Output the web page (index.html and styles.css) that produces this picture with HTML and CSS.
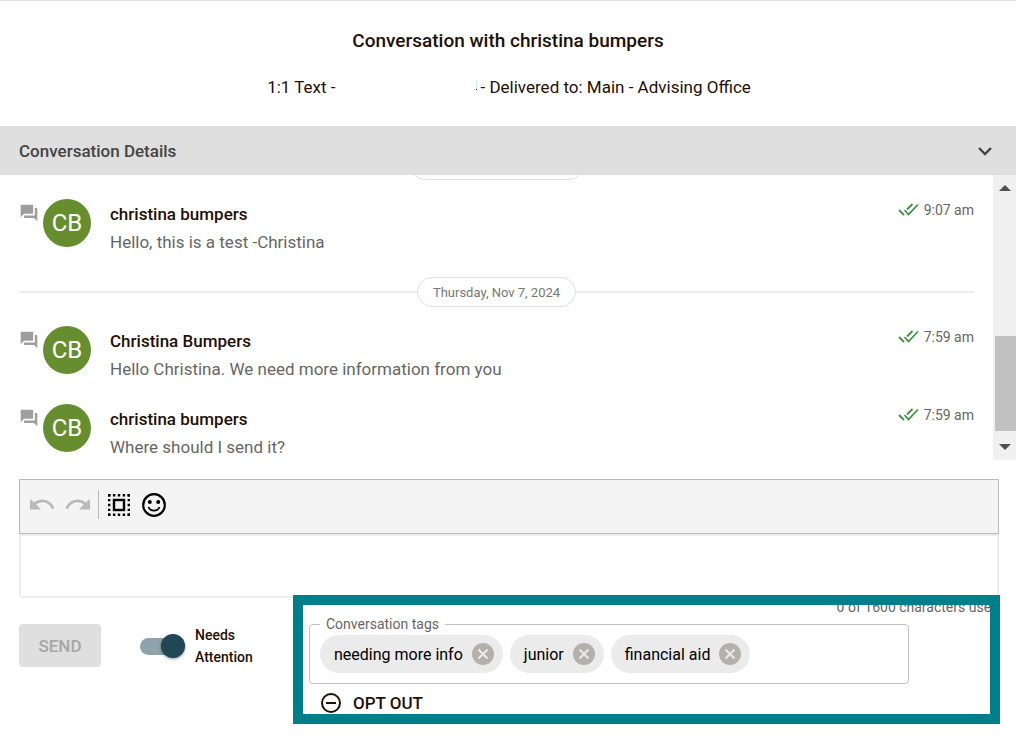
FILE: index.html
```
<!DOCTYPE html>
<html lang="en">
<head>
  <meta charset="UTF-8">
  <title>Conversation with christina bumpers</title>
  <link rel="stylesheet" href="styles.css">
</head>
<body>
  <!-- shared icon shapes -->
  <svg class="sprite" aria-hidden="true">
    <symbol id="forum" viewBox="0 0 24 24"><path d="M21 6h-2v9H6v2c0 .55.45 1 1 1h11l4 4V7c0-.55-.45-1-1-1zm-4 6V3c0-.55-.45-1-1-1H3c-.55 0-1 .45-1 1v14l4-4h10c.55 0 1-.45 1-1z"/></symbol>
    <symbol id="checks" viewBox="0 0 22 14"><path d="M1 7l5 5M6.500 7l4 4.500L20 1.500M9 6.500L14.500 1" fill="none" stroke="#3f9142" stroke-width="1.800"/></symbol>
    <symbol id="cancel" viewBox="0 0 22 22"><circle cx="11" cy="11" r="11" fill="#b4b1ac"/><path d="M6.500 6.500l9 9m0-9l-9 9" stroke="#ebebeb" stroke-width="2"/></symbol>
  </svg>

  <header class="header">
    <h1>Conversation with christina bumpers</h1>
    <p>1:1 Text -<span class="number"></span>- Delivered to: Main - Advising Office</p>
  </header>

  <button class="details" type="button">
    Conversation Details
    <svg width="14" height="9" viewBox="0 0 14 9"><path d="M1 1l6 6 6-6" fill="none" stroke="#444" stroke-width="2.400"/></svg>
  </button>

  <main class="history">
    <div class="messages">
      <div class="divider"><span class="date earlier"></span></div>
      <article class="message">
        <svg class="forum"><use href="#forum"/></svg>
        <div class="avatar">CB</div>
        <div class="text">
          <h2>christina bumpers</h2>
          <p>Hello, this is a test -Christina</p>
        </div>
        <div class="time"><svg><use href="#checks"/></svg>9:07 am</div>
      </article>
      <div class="divider"><span class="date">Thursday, Nov 7, 2024</span></div>
      <article class="message">
        <svg class="forum"><use href="#forum"/></svg>
        <div class="avatar">CB</div>
        <div class="text">
          <h2>Christina Bumpers</h2>
          <p>Hello Christina. We need more information from you</p>
        </div>
        <div class="time"><svg><use href="#checks"/></svg>7:59 am</div>
      </article>
      <article class="message">
        <svg class="forum"><use href="#forum"/></svg>
        <div class="avatar">CB</div>
        <div class="text">
          <h2>christina bumpers</h2>
          <p>Where should I send it?</p>
        </div>
        <div class="time"><svg><use href="#checks"/></svg>7:59 am</div>
      </article>
    </div>
    <div class="scrollbar">
      <svg width="12" height="6" viewBox="0 0 12 6"><path d="M0 6l6-6 6 6z"/></svg>
      <div class="thumb"></div>
      <svg width="12" height="6" viewBox="0 0 12 6"><path d="M0 0l6 6 6-6z"/></svg>
    </div>
  </main>

  <section class="editor">
    <div class="toolbar">
      <button type="button" aria-label="Undo" disabled>
        <svg width="25" height="11" viewBox="0 0 25 11"><path d="M0 0l4.200 3.500C6.500 1.600 9.500.6 12.500.6c5.500 0 10 3.500 12 8.600l-2.600.9c-1.400-4-5-6.900-9.400-6.900-2.300 0-4.500.8-6.200 2.200L11 10.500H0z" fill="#b9b9b9"/></svg>
      </button>
      <button type="button" aria-label="Redo" disabled>
        <svg width="25" height="11" viewBox="0 0 25 11"><path d="M25 0l-4.200 3.500C18.500 1.600 15.500.6 12.500.6 7 .6 2.500 4.100.5 9.200l2.600.9c1.400-4 5-6.900 9.400-6.900 2.300 0 4.500.8 6.200 2.200L14 10.500h11z" fill="#b9b9b9"/></svg>
      </button>
      <span class="separator"></span>
      <button type="button" aria-label="Select all">
        <svg width="22" height="22" viewBox="0 0 22 22">
          <path d="M0 1.200h22M0 20.800h22" stroke="#000" stroke-width="2.400" stroke-dasharray="2.400 2.500"/>
          <path d="M1.200 0v22M20.800 0v22" stroke="#000" stroke-width="2.400" stroke-dasharray="2.400 2.500"/>
          <rect x="6" y="6" width="10" height="10" fill="none" stroke="#000" stroke-width="2.400"/>
        </svg>
      </button>
      <button type="button" aria-label="Insert emoji">
        <svg width="24" height="24" viewBox="0 0 24 24">
          <circle cx="12" cy="12" r="10.800" fill="none" stroke="#000" stroke-width="2.200"/>
          <circle cx="7.800" cy="9" r="2"/><circle cx="16.200" cy="9" r="2"/>
          <path d="M6.500 14c1 2.400 3 3.700 5.500 3.700s4.500-1.300 5.500-3.700" fill="none" stroke="#000" stroke-width="1.800"/>
        </svg>
      </button>
    </div>
    <textarea aria-label="Message"></textarea>
  </section>

  <footer class="footer">
    <p class="counter">0 of 1600 characters used</p>
    <div class="actions">
      <div class="sending">
        <button class="send" type="button" disabled>SEND</button>
        <label class="attention"><input type="checkbox" role="switch" checked><span>Needs Attention</span></label>
      </div>
      <div class="tagging">
        <fieldset>
          <legend>Conversation tags</legend>
          <span class="chip">needing more info<button type="button" aria-label="Remove needing more info"><svg><use href="#cancel"/></svg></button></span>
          <span class="chip">junior<button type="button" aria-label="Remove junior"><svg><use href="#cancel"/></svg></button></span>
          <span class="chip">financial aid<button type="button" aria-label="Remove financial aid"><svg><use href="#cancel"/></svg></button></span>
        </fieldset>
        <button class="opt-out" type="button">
          <svg width="20" height="20" viewBox="0 0 20 20"><circle cx="10" cy="10" r="9" fill="none" stroke="#220f06" stroke-width="2"/><path d="M5 10h10" stroke="#220f06" stroke-width="2"/></svg>
          OPT OUT
        </button>
      </div>
    </div>
    <div class="highlight"></div>
  </footer>
</body>
</html>
```

FILE: styles.css
```
* {
  box-sizing: border-box;
}

body {
  margin: 0;
  font-family: Roboto, Arial, sans-serif;
  font-size: 17px;
  color: #220f06;
  background: #fff;
}

h1, h2, p {
  margin: 0;
}

button {
  font: inherit;
  color: inherit;
  padding: 0;
  border: 0;
  background: none;
}

svg {
  display: block;
  flex: none;
}

.sprite {
  position: absolute;
  width: 0;
  height: 0;
}

.header {
  border-top: 1px solid #e0e0e0;
  padding: 28px 0 27px;
  text-align: center;
}

.header h1 {
  font-size: 19px;
  font-weight: 500;
  line-height: 24px;
}

.header p {
  margin-top: 22px;
  padding-left: 2px;
  line-height: 24px;
}

/* the phone number is blanked out, only the edge of the last digit is left */
.number {
  display: inline-block;
  width: 141px;
  height: 12px;
  margin-right: 4px;
  background: linear-gradient(#c4f3f5 8px, #220f06 8px 9px, #fff 9px) right / 1px 100% no-repeat;
}

.details {
  display: flex;
  align-items: center;
  justify-content: space-between;
  width: 100%;
  padding: 13px 24px 12px 19px;
  background: #dfdfdf;
  color: #444;
  font-weight: 500;
  line-height: 24px;
}

.history {
  display: flex;
  height: 285px;
}

.messages {
  flex: 1;
  display: flex;
  flex-direction: column;
  justify-content: flex-end;
  padding: 0 19px;
  overflow: hidden;
}

.message {
  display: flex;
  flex: none;
  margin-top: 22px;
}

.divider + .message {
  margin-top: 19px;
}

.forum {
  width: 20px;
  height: 20px;
  margin: 4px 4px 0 0;
  fill: #9e9e9e;
}

.avatar {
  width: 48px;
  height: 48px;
  border-radius: 50%;
  background: #668d2e;
  color: #fff;
  font-size: 24px;
  line-height: 48px;
  text-align: center;
}

.text {
  flex: 1;
  padding-left: 19px;
}

.text h2 {
  font-size: 17px;
  font-weight: 500;
  line-height: 30px;
}

.text p {
  color: #666;
  line-height: 26px;
}

.time {
  display: flex;
  align-items: center;
  height: 22px;
  color: #666;
  font-size: 14px;
}

.time svg {
  width: 22px;
  height: 14px;
  margin-right: 4px;
}

.divider {
  display: flex;
  flex: none;
  align-items: center;
  margin-top: 22px;
}

.divider::before,
.divider::after {
  content: "";
  flex: 1;
  height: 2px;
  background: #ececec;
}

.date {
  height: 30px;
  padding: 0 15px;
  border: 1px solid #dfdfdf;
  border-radius: 15px;
  color: #777;
  font-size: 13px;
  line-height: 29px;
}

.earlier {
  width: 174px;
}

.scrollbar {
  display: flex;
  flex-direction: column;
  align-items: center;
  width: 23px;
  padding: 10px 0;
  background: #f0f0f0;
  fill: #505050;
}

.thumb {
  align-self: flex-end;
  width: 21px;
  height: 95px;
  margin: auto 0 13px;
  background: #c1c1c1;
}

.editor {
  padding: 19px 17px 0 19px;
}

.toolbar {
  display: flex;
  align-items: center;
  gap: 10px;
  height: 55px;
  padding: 0 10px 4px;
  border: 1px solid #b9b9b9;
  background: #f4f4f4;
}

.separator {
  width: 1px;
  height: 29px;
  margin: 0 -1px 0 -2px;
  background: #b9b9b9;
}

.toolbar button:last-child {
  margin-left: 2px;
}

textarea {
  display: block;
  width: 100%;
  height: 64px;
  padding: 8px;
  border: 2px solid #ededed;
  border-radius: 0 0 4px 4px;
  font: inherit;
  resize: none;
}

.footer {
  position: relative;
  padding: 0 17px 20px 19px;
}

.counter {
  color: #666;
  font-size: 14px;
  line-height: 18px;
  text-align: right;
}

.actions {
  display: grid;
  grid-template-columns: 290px 1fr;
}

.sending {
  display: flex;
  align-items: flex-start;
  gap: 39px;
  padding-top: 8px;
}

.send {
  width: 82px;
  height: 43px;
  border-radius: 4px;
  background: #dfdfdf;
  color: #a6a6a6;
  font-weight: 500;
}

.attention {
  display: flex;
  align-items: center;
  gap: 10px;
  font-size: 14px;
  font-weight: 500;
  line-height: 22px;
}

.attention span {
  width: 70px;
}

.attention input {
  appearance: none;
  display: flex;
  flex: none;
  align-items: center;
  justify-content: flex-end;
  width: 45px;
  height: 17px;
  margin: 0;
  border-radius: 9px;
  background: #90a2aa;
}

.attention input::before {
  content: "";
  flex: none;
  width: 24px;
  height: 24px;
  border-radius: 50%;
  background: #214656;
  box-shadow: 0 1px 3px rgba(0, 0, 0, 0.4);
}

.tagging {
  padding-right: 90px;
}

fieldset {
  display: flex;
  gap: 7px;
  margin: 0;
  padding: 3px 10px 10px;
  border: 1px solid #c2c2c2;
  border-radius: 4px;
}

legend {
  padding: 0 6px;
  color: #666;
  font-size: 14px;
  line-height: 16px;
}

.chip {
  display: flex;
  align-items: center;
  gap: 9px;
  height: 38px;
  padding: 0 9px 0 14px;
  border-radius: 19px;
  background: #ebebeb;
  color: #000;
  font-size: 16px;
}

.chip svg {
  width: 22px;
  height: 22px;
}

.opt-out {
  display: flex;
  align-items: center;
  gap: 12px;
  margin: 7px 0 0 12px;
  font-weight: 500;
  line-height: 24px;
}

/* callout frame drawn over the tag controls */
.highlight {
  position: absolute;
  inset: -3px 16px auto 293px;
  height: 129px;
  border: 10px solid #007f8a;
  pointer-events: none;
}
```
